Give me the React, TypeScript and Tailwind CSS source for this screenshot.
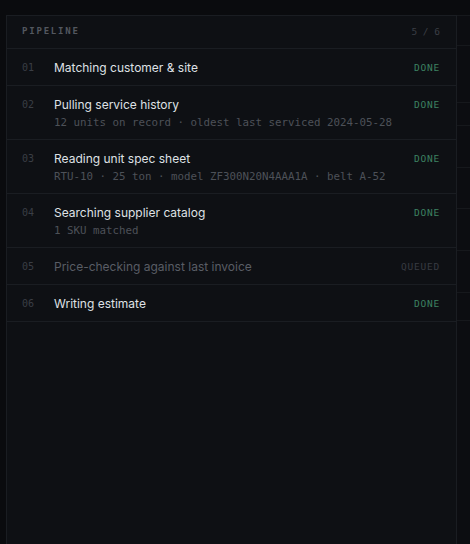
const steps = [
  { n: "01", title: "Matching customer & site", sub: "", status: "DONE" },
  {
    n: "02",
    title: "Pulling service history",
    sub: "12 units on record · oldest last serviced 2024-05-28",
    status: "DONE",
  },
  {
    n: "03",
    title: "Reading unit spec sheet",
    sub: "RTU-10 · 25 ton · model ZF300N20N4AAA1A · belt A-52",
    status: "DONE",
  },
  { n: "04", title: "Searching supplier catalog", sub: "1 SKU matched", status: "DONE" },
  { n: "05", title: "Price-checking against last invoice", sub: "", status: "QUEUED" },
  { n: "06", title: "Writing estimate", sub: "", status: "DONE" },
];

const mono = { fontFamily: '"DejaVu Sans Mono", "Liberation Mono", monospace' };

function StepRow({ step }: { step: (typeof steps)[number] }) {
  const queued = step.status === "QUEUED";
  return (
    <div className="flex items-start border-b border-[#1a1d22] pt-[10px] pb-[9px] pl-[15px] pr-[16px]">
      <div className="w-[32px] text-[10px] leading-[17px] text-[#3a3e45]" style={mono}>
        {step.n}
      </div>
      <div className="flex-1 min-w-0">
        <div
          className={
            queued
              ? "text-[12px] leading-[17px] text-[#595d65]"
              : "text-[12px] leading-[17px] text-[#dfe1e5]"
          }
        >
          {step.title}
        </div>
        {step.sub && (
          <div
            className="mt-[2px] text-[10.8px] leading-[15px] text-[#4d5158] whitespace-nowrap"
            style={mono}
          >
            {step.sub}
          </div>
        )}
      </div>
      <div
        className={
          queued
            ? "text-[9.5px] leading-[17px] tracking-[0.08em] text-[#383b42]"
            : "text-[9.5px] leading-[17px] tracking-[0.08em] text-[#3d8262]"
        }
        style={mono}
      >
        {step.status}
      </div>
    </div>
  );
}

export default function App() {
  return (
    <div
      className="flex h-[544px] w-[470px] overflow-hidden bg-[#0a0b0e]"
      style={{ fontFamily: 'Inter, "Noto Sans", sans-serif' }}
    >
      <div className="w-[6px] shrink-0" />
      <div className="mt-[15px] flex w-[451px] shrink-0 flex-col border-l border-r border-t border-[#1a1d22] bg-[#0e1014]">
        <div className="flex h-[33px] items-center justify-between border-b border-[#1a1d22] pl-[15px] pr-[16px]">
          <span className="text-[9px] font-bold tracking-[0.2em] text-[#53575f]" style={mono}>
            PIPELINE
          </span>
          <span className="text-[9.5px] text-[#3b3e45]" style={mono}>
            5 / 6
          </span>
        </div>
        {steps.map((s) => (
          <StepRow key={s.n} step={s} />
        ))}
        <div className="flex-1" />
      </div>
      <div className="mt-[15px] flex flex-1 flex-col border-t border-[#16181c] bg-[#0c0d11]">
        <div className="h-[30px] border-b border-[#16181c]" />
        <div className="h-[57px] border-b border-[#16181c]" />
        <div className="h-[23px] border-b border-[#16181c]" />
        <div className="h-[42px] border-b border-[#16181c]" />
        <div className="h-[41px] border-b border-[#16181c]" />
        <div className="h-[42px] border-b border-[#16181c]" />
        <div className="h-[42px] border-b border-[#16181c]" />
        <div className="h-[28px] border-b border-[#16181c]" />
      </div>
    </div>
  );
}
